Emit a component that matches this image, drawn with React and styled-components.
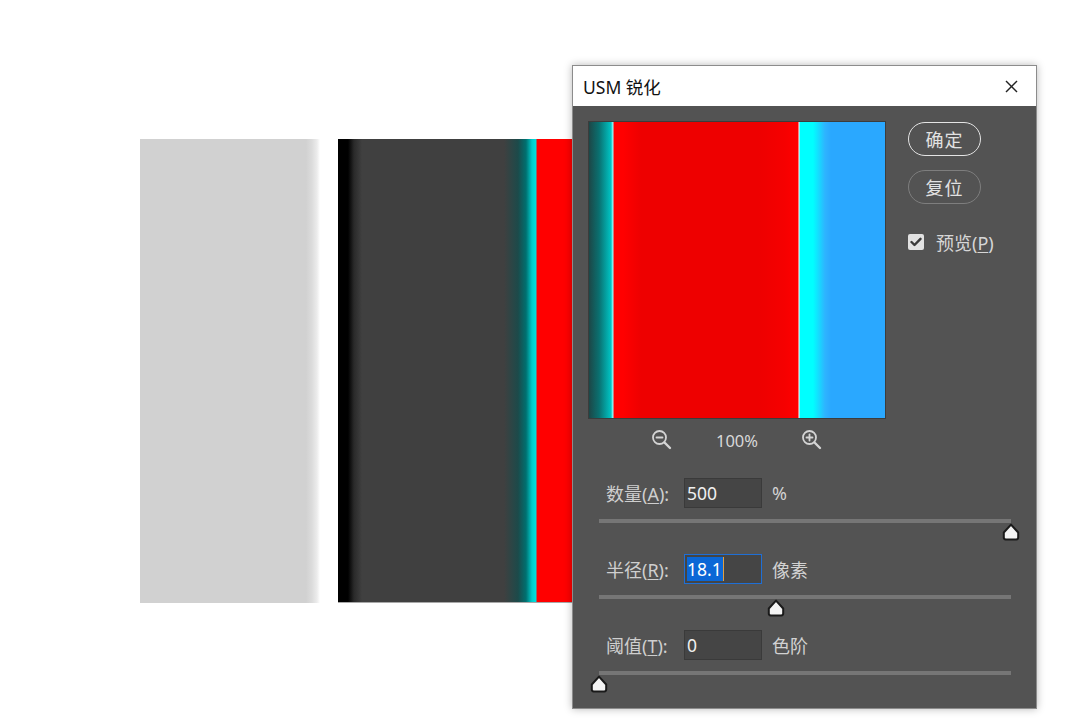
import styled, { createGlobalStyle } from 'styled-components';

const GlobalStyle = createGlobalStyle`
  html, body {
    margin: 0;
    padding: 0;
    background: #ffffff;
  }
`;

const Page = styled.div`
  position: relative;
  width: 1080px;
  height: 718px;
  overflow: hidden;
  background: #ffffff;
  font-family: 'Noto Sans', 'Noto Sans CJK SC', sans-serif;
`;

const Canvas = styled.div`
  display: flex;
  gap: 18px;
  padding: 139px 0 0 140px;
`;

const GreyBar = styled.div`
  width: 180px;
  height: 464px;
  background: linear-gradient(
    to right,
    #d1d1d1 0,
    #d1d1d1 166px,
    #dcdcdc 172px,
    #ececec 177px,
    #ffffff 180px
  );
`;

const DarkBar = styled.div`
  width: 250px;
  height: 463px;
  border-bottom: 1px solid #a8a8a8;
  background: linear-gradient(
    to right,
    #000000 0,
    #000000 10px,
    #2a2a2a 16px,
    #404040 24px,
    #404040 166px,
    #1c4a4a 180px,
    #007070 188px,
    #00cccc 194px,
    #00e0e0 198px,
    #ff0000 199px,
    #ff0000 250px
  );
`;

const Dialog = styled.div`
  position: absolute;
  left: 572px;
  top: 65px;
  width: 463px;
  height: 642px;
  border: 1px solid #8c8c8c;
  box-shadow: 0 0 8px rgba(0, 0, 0, 0.28);
  display: flex;
  flex-direction: column;
`;

const TitleBar = styled.div`
  flex-shrink: 0;
  height: 40px;
  background: #ffffff;
  display: flex;
  align-items: center;
  justify-content: space-between;
  padding: 0 18px 0 10px;
  font-size: 17.5px;
  color: #111;
`;

const Body = styled.div`
  flex: 1;
  min-height: 0;
  overflow: hidden;
  background: #535353;
  padding: 15px 0 0 15px;
  display: flex;
  flex-direction: column;
`;

const Top = styled.div`
  display: flex;
  gap: 22px;
`;

const PreviewCol = styled.div`
  width: 298px;
  display: flex;
  flex-direction: column;
`;

const Preview = styled.div`
  width: 296px;
  height: 296px;
  border: 1px solid #3c3c3c;
  background: linear-gradient(
    to right,
    #1d4747 0,
    #0a7070 10px,
    #00c4c4 22px,
    #9ff 24px,
    #ff0000 25px,
    #ff0000 34px,
    #ee0000 52px,
    #ee0000 170px,
    #f60000 196px,
    #ff0000 209px,
    #ffffff 210px,
    #00ffff 211px,
    #00ffff 224px,
    #2eb4ff 236px,
    #2aa8ff 242px,
    #2aa8ff 296px
  );
`;

const ZoomRow = styled.div`
  height: 42px;
  display: flex;
  align-items: center;
  justify-content: center;
  gap: 43px;
  color: #d8d8d8;
  font-size: 16.5px;
`;

const SideCol = styled.div`
  display: flex;
  flex-direction: column;
  padding-top: 1px;
`;

const PillButton = styled.div`
  width: 71px;
  height: 32px;
  border-radius: 18px;
  border: 1.5px solid ${(p) => (p.$primary ? '#e4e4e4' : '#7e7e7e')};
  color: #e2e2e2;
  font-size: 18px;
  display: flex;
  align-items: center;
  justify-content: center;
  letter-spacing: 1px;
  margin-bottom: 14px;
`;

const CheckRow = styled.label`
  display: flex;
  align-items: center;
  gap: 12px;
  margin-top: 11px;
  color: #d6d6d6;
  font-size: 18px;
`;

const CheckBox = styled.span`
  width: 16px;
  height: 16px;
  border-radius: 2px;
  background: #e2e2e2;
  display: flex;
  align-items: center;
  justify-content: center;
`;

const Params = styled.div`
  margin-top: 17px;
  padding: 0 25px 0 11px;
  display: flex;
  flex-direction: column;
`;

const ParamRow = styled.div`
  display: flex;
  align-items: center;
  height: 30px;
  padding-left: 7px;
`;

const Label = styled.span`
  width: 78px;
  color: #cfcfcf;
  font-size: 18px;
  white-space: nowrap;
`;

const U = styled.span`
  text-decoration: underline;
  text-underline-offset: 2px;
`;

const Input = styled.div`
  width: 73px;
  height: 26px;
  background: #454545;
  border: ${(p) => (p.$focused ? '1px solid #1f6fd6' : '1px solid #3a3a3a')};
  padding: 1px 1px 1px 2px;
  display: flex;
  align-items: center;
  color: #f0f0f0;
  font-size: 17.5px;
`;

const Selected = styled.span`
  background: #0b67d6;
  color: #ffffff;
  line-height: 24px;
  padding-right: 1px;
  border-right: 1px solid #e0a040;
`;

const Unit = styled.span`
  margin-left: 10px;
  color: #d2d2d2;
  font-size: 18px;
`;

const Track = styled.div`
  position: relative;
  height: 4px;
  margin: 11px 0 31px;
  background: #767676;
`;

const Thumb = styled.svg`
  position: absolute;
  top: 4px;
  transform: translateX(-50%);
`;

const ZoomIcon = ({ plus }) => (
  <svg width="22" height="22" viewBox="0 0 22 22" fill="none" stroke="#d4d4d4" strokeWidth="1.8" strokeLinecap="round">
    <circle cx="8.5" cy="8.5" r="6.5" />
    <line x1="5.5" y1="8.5" x2="11.5" y2="8.5" />
    {plus && <line x1="8.5" y1="5.5" x2="8.5" y2="11.5" />}
    <line x1="13.5" y1="13.5" x2="19" y2="19" strokeWidth="2.4" />
  </svg>
);

const Slider = ({ value }) => (
  <Track>
    <Thumb style={{ left: `${value}%` }} width="18" height="18" viewBox="0 0 18 18">
      <path d="M9 1.6 L16.2 9.5 L16.2 14.6 Q16.2 16.4 14.4 16.4 L3.6 16.4 Q1.8 16.4 1.8 14.6 L1.8 9.5 Z" fill="#f4f4f4" stroke="#1a1a1a" strokeWidth="2" strokeLinejoin="round" />
    </Thumb>
  </Track>
);

const params = [
  { label: '数量', key: 'A', value: '500', unit: '%', pos: 100 },
  { label: '半径', key: 'R', value: '18.1', unit: '像素', pos: 43, focused: true },
  { label: '阈值', key: 'T', value: '0', unit: '色阶', pos: 0 },
];

export default function App() {
  return (
    <Page>
      <GlobalStyle />
      <Canvas>
        <GreyBar />
        <DarkBar />
      </Canvas>

      <Dialog>
        <TitleBar>
          <span>USM 锐化</span>
          <svg width="13" height="13" viewBox="0 0 13 13" stroke="#222" strokeWidth="1.4">
            <line x1="1" y1="1" x2="12" y2="12" />
            <line x1="12" y1="1" x2="1" y2="12" />
          </svg>
        </TitleBar>
        <Body>
          <Top>
            <PreviewCol>
              <Preview />
              <ZoomRow>
                <ZoomIcon />
                <span>100%</span>
                <ZoomIcon plus />
              </ZoomRow>
            </PreviewCol>
            <SideCol>
              <PillButton $primary>确定</PillButton>
              <PillButton>复位</PillButton>
              <CheckRow>
                <CheckBox>
                  <svg width="12" height="10" viewBox="0 0 12 10" fill="none" stroke="#3a3a3a" strokeWidth="2.4" strokeLinecap="round" strokeLinejoin="round">
                    <path d="M1.5 5 L4.5 8 L10.5 1.8" />
                  </svg>
                </CheckBox>
                <span>
                  预览(<U>P</U>)
                </span>
              </CheckRow>
            </SideCol>
          </Top>

          <Params>
            {params.map((p) => (
              <div key={p.key}>
                <ParamRow>
                  <Label>
                    {p.label}(<U>{p.key}</U>):
                  </Label>
                  <Input $focused={p.focused}>
                    {p.focused ? <Selected>{p.value}</Selected> : p.value}
                  </Input>
                  <Unit>{p.unit}</Unit>
                </ParamRow>
                <Slider value={p.pos} />
              </div>
            ))}
          </Params>
        </Body>
      </Dialog>
    </Page>
  );
}
